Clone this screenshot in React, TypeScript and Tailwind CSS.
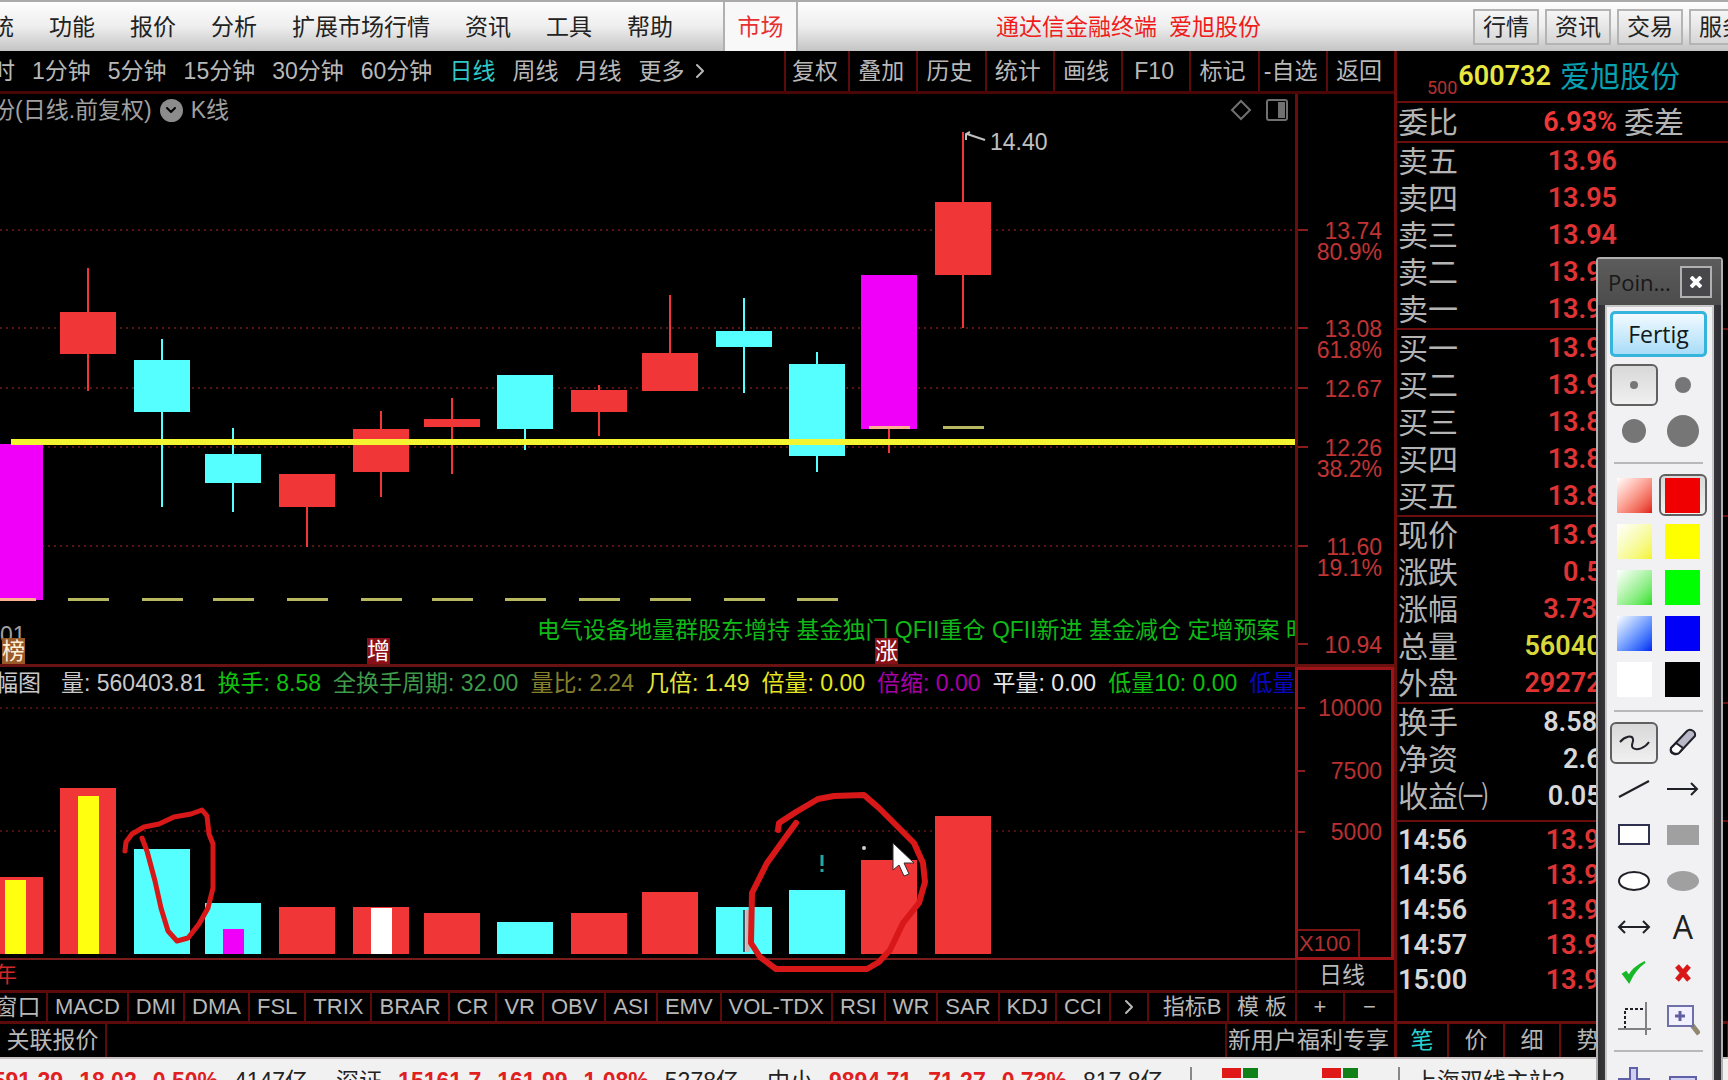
import type { ReactNode } from 'react'
import { ChevronDown, ChevronRight } from 'lucide-react'

const RED = '#f03636'
const CYAN = '#55ffff'
const MAGENTA = '#f000f8'

const MENU = ['功能', '报价', '分析', '扩展市场行情', '资讯', '工具', '帮助']
const PERIODS = ['分时', '1分钟', '5分钟', '15分钟', '30分钟', '60分钟', '日线', '周线', '月线']
const CHART_TOOLS = ['复权', '叠加', '历史', '统计', '画线', 'F10', '标记', '-自选', '返回']
const INDICATORS = [
  'MACD', 'DMI', 'DMA', 'FSL', 'TRIX', 'BRAR', 'CR', 'VR', 'OBV', 'ASI',
  'EMV', 'VOL-TDX', 'RSI', 'WR', 'SAR', 'KDJ', 'CCI',
]

// x, body top, body bottom, wick top, wick bottom (y measured from the chart's top)
type Candle = { x: number; top: number; bottom: number; high: number; low: number; fill: string }
const CANDLES: Candle[] = [
  { x: -13, top: 350, bottom: 506, high: 350, low: 506, fill: MAGENTA },
  { x: 60,  top: 218, bottom: 260, high: 174, low: 297, fill: RED },
  { x: 134, top: 266, bottom: 318, high: 245, low: 413, fill: CYAN },
  { x: 205, top: 360, bottom: 389, high: 334, low: 418, fill: CYAN },
  { x: 279, top: 380, bottom: 413, high: 380, low: 453, fill: RED },
  { x: 353, top: 335, bottom: 378, high: 317, low: 403, fill: RED },
  { x: 424, top: 325, bottom: 333, high: 304, low: 380, fill: RED },
  { x: 497, top: 281, bottom: 335, high: 281, low: 356, fill: CYAN },
  { x: 571, top: 296, bottom: 318, high: 291, low: 342, fill: RED },
  { x: 642, top: 259, bottom: 297, high: 201, low: 297, fill: RED },
  { x: 716, top: 237, bottom: 253, high: 204, low: 299, fill: CYAN },
  { x: 789, top: 270, bottom: 362, high: 258, low: 378, fill: CYAN },
  { x: 861, top: 181, bottom: 335, high: 181, low: 359, fill: MAGENTA },
  { x: 935, top: 108, bottom: 181, high: 38,  low: 234, fill: RED },
]

const PRICE_AXIS = [
  { y: 136, price: '13.74', pct: '80.9%' },
  { y: 234, price: '13.08', pct: '61.8%' },
  { y: 294, price: '12.67' },
  { y: 353, price: '12.26', pct: '38.2%' },
  { y: 452, price: '11.60', pct: '19.1%' },
  { y: 550, price: '10.94' },
]

// bar height, with an optional inner bar
type Volume = { x: number; h: number; fill: string; inner?: { h: number; fill: string } }
const VOLUMES: Volume[] = [
  { x: -13, h: 77,  fill: RED, inner: { h: 74, fill: '#ffff10' } },
  { x: 60,  h: 166, fill: RED, inner: { h: 158, fill: '#ffff10' } },
  { x: 134, h: 105, fill: CYAN },
  { x: 205, h: 51,  fill: CYAN, inner: { h: 25, fill: MAGENTA } },
  { x: 279, h: 47,  fill: RED },
  { x: 353, h: 47,  fill: RED, inner: { h: 46, fill: '#ffffff' } },
  { x: 424, h: 41,  fill: RED },
  { x: 497, h: 32,  fill: CYAN },
  { x: 571, h: 41,  fill: RED },
  { x: 642, h: 62,  fill: RED },
  { x: 716, h: 47,  fill: CYAN },
  { x: 789, h: 64,  fill: CYAN },
  { x: 861, h: 94,  fill: RED },
  { x: 935, h: 138, fill: RED },
]

const VOLUME_AXIS = [
  { y: 40, label: '10000' },
  { y: 103, label: '7500' },
  { y: 164, label: '5000' },
]

const VOLUME_STATS = [
  { text: '量: 560403.81', cls: 'text-[#c8c8c8]' },
  { text: '换手: 8.58', cls: 'text-[#10c010]' },
  { text: '全换手周期: 32.00', cls: 'text-[#3f9a4a]' },
  { text: '量比: 2.24', cls: 'text-[#85802c]' },
  { text: '几倍: 1.49', cls: 'text-[#e6e63c]' },
  { text: '倍量: 0.00', cls: 'text-[#e6e620]' },
  { text: '倍缩: 0.00', cls: 'text-[#a800a8]' },
  { text: '平量: 0.00', cls: 'text-[#e8e8e8]' },
  { text: '低量10: 0.00', cls: 'text-[#10c010]' },
  { text: '低量', cls: 'text-[#0808c0]' },
]

type Quote = { label: string; value: string; cls?: string }
const SECTIONS: Quote[][] = [
  [
    { label: '卖五', value: '13.96' },
    { label: '卖四', value: '13.95' },
    { label: '卖三', value: '13.94' },
    { label: '卖二', value: '13.93' },
    { label: '卖一', value: '13.92' },
  ],
  [
    { label: '买一', value: '13.91' },
    { label: '买二', value: '13.90' },
    { label: '买三', value: '13.89' },
    { label: '买四', value: '13.88' },
    { label: '买五', value: '13.87' },
  ],
  [
    { label: '现价', value: '13.91' },
    { label: '涨跌', value: '0.50' },
    { label: '涨幅', value: '3.73%' },
    { label: '总量', value: '560404', cls: 'text-[#d8d83c]' },
    { label: '外盘', value: '292724' },
  ],
  [
    { label: '换手', value: '8.58%', cls: 'text-[#d8d8d8]' },
    { label: '净资', value: '2.60', cls: 'text-[#d8d8d8]' },
    { label: '收益㈠', value: '0.050', cls: 'text-[#d8d8d8]' },
  ],
]

const TICKS = ['14:56', '14:56', '14:56', '14:57', '15:00']

const INDEXES = [
  { name: '上证', last: '3591.29', change: '18.02', pct: '0.50%', amount: '4147亿' },
  { name: '深证', last: '15161.7', change: '161.99', pct: '1.08%', amount: '5278亿' },
  { name: '中小', last: '9894.71', change: '71.27', pct: '0.73%', amount: '817.8亿' },
]

function MenuBar() {
  return (
    <header className="flex h-[51px] shrink-0 items-stretch whitespace-nowrap border-t-2 border-[#a9aaac] bg-linear-to-b from-[#fdfdfd] via-[#eeeeee] to-[#c4c4c4] text-[23px] leading-[28px] text-[#222]">
      <nav className="-ml-[32px] flex items-center gap-[35px] pr-[50px]">
        <button>系统</button>
        {MENU.map((m) => <button key={m}>{m}</button>)}
      </nav>
      <button className="w-[75px] border-x-2 border-[#b0b0b0] bg-[#f8f8f8] text-[#e83030]">市场</button>
      <div className="ml-[198px] flex items-center gap-3 text-[#f01c1c]">
        <span>通达信金融终端</span>
        <span>爱旭股份</span>
      </div>
      <div className="ml-auto -mr-[27px] flex items-center gap-[6px]">
        {['行情', '资讯', '交易', '服务'].map((b) => (
          <button key={b} className="h-[36px] w-[66px] border-2 border-[#b4b4b4] bg-linear-to-b from-[#f6f6f6] to-[#d6d6d6]">{b}</button>
        ))}
      </div>
    </header>
  )
}

function PeriodBar() {
  return (
    <div className="flex h-[43px] shrink-0 justify-between whitespace-nowrap border-b-3 border-[#4a0505] text-[23px] leading-[28px] text-[#b8b8b8]">
      <nav className="-ml-[31px] flex items-center gap-[17px]">
        {PERIODS.map((p) => (
          <button key={p} className={p === '日线' ? 'text-[#30c8c8]' : ''}>{p}</button>
        ))}
        <button className="flex items-center gap-1">更多<ChevronRight size={24} strokeWidth={2} /></button>
      </nav>
      <div className="grid w-[610px] grid-cols-[64px_repeat(8,1fr)]">
        {CHART_TOOLS.map((t) => (
          <button key={t} className="border-l-2 border-[#5c0a0a] pr-1">{t}</button>
        ))}
      </div>
    </div>
  )
}

function PriceChart() {
  return (
    <div className="flex h-[573px] shrink-0 border-b-3 border-[#6a1212]">
      <div className="relative min-w-0 flex-1">
        <svg className="block h-full w-full" fontSize="23">
          {PRICE_AXIS.slice(0, 5).map((t) => (
            <line key={t.y} x1="0" x2="100%" y1={t.y} y2={t.y} stroke="#5a1414" strokeWidth="2" strokeDasharray="2 4" />
          ))}
          {CANDLES.map((c) => (
            <g key={c.x} fill={c.fill}>
              <rect x={c.x + 27} y={c.high} width="2" height={c.low - c.high} fill={c.fill === MAGENTA ? RED : c.fill} />
              <rect x={c.x} y={c.top} width="56" height={c.bottom - c.top} />
            </g>
          ))}
          {/* stop levels */}
          {CANDLES.map((c, i) => (
            <rect key={c.x} x={c.x + 8} y={i > 11 ? 332 : 504} width="41" height="3" fill={i === 0 || i === 12 ? '#ffb090' : '#b8b860'} />
          ))}
          <line x1="11" x2="100%" y1="348" y2="348" stroke="#f4f430" strokeWidth="6" />
          <path d="M966 46v-6l4-2M967 40l18 6" fill="none" stroke="#c0c0c0" strokeWidth="2" />
          <text x="990" y="56" fill="#c0c0c0">14.40</text>
          <text x="0" y="549" fill="#a0a0a0">01</text>
          <text x="537" y="544" fill="#10b818">电气设备地量群股东增持 基金独门 QFII重仓 QFII新进 基金减仓 定增预案 时</text>
        </svg>
        <div className="absolute left-0 top-0 -ml-[77px] flex items-center whitespace-nowrap text-[23px] leading-[32px] text-[#a0a0a0]">
          <span>爱旭股份(日线.前复权)</span>
          <button aria-label="展开" className="mx-2 flex size-[23px] items-center justify-center rounded-full bg-[#8c8c8c] text-black">
            <ChevronDown size={16} strokeWidth={3} />
          </button>
          <span>K线</span>
        </div>
        <div className="absolute right-[6px] top-1 flex items-center gap-3">
          <svg width="24" height="24" fill="none" stroke="#707070" strokeWidth="2">
            <path d="M12 3l9 9-9 9-9-9z" />
          </svg>
          <svg width="24" height="24" fill="none" stroke="#707070" strokeWidth="2">
            <rect x="2" y="2" width="20" height="20" rx="2" />
            <rect x="14" y="5" width="5" height="14" fill="#707070" />
          </svg>
        </div>
        <span className="absolute bottom-0 left-[2px] bg-[#9a5a28] text-[23px] leading-[26px] text-[#fff0d8]">榜</span>
        <span className="absolute bottom-0 left-[367px] bg-[#8a1018] text-[23px] leading-[26px] text-white">增</span>
        <span className="absolute bottom-0 left-[875px] bg-[#8a1018] text-[23px] leading-[26px] text-white">涨</span>
      </div>
      <svg className="block h-full w-[99px] border-l-3 border-[#6a0d0d]" fontSize="23" fill="#c03434" textAnchor="end">
        {PRICE_AXIS.map((t) => (
          <g key={t.y}>
            <rect x="0" y={t.y - 1} width="10" height="2" fill="#8a1c1c" />
            <text x="84" y={t.y + 9}>{t.price}</text>
            {t.pct && <text x="84" y={t.y + 30}>{t.pct}</text>}
          </g>
        ))}
      </svg>
    </div>
  )
}

function VolumeChart() {
  const base = 287
  return (
    <div className="relative z-10 flex h-[293px] shrink-0">
      <div className="relative min-w-0 flex-1 border-b-2 border-[#7a1c1c]">
        <svg className="block h-full w-full overflow-visible">
          <line x1="0" x2="100%" y1="41" y2="41" stroke="#4a1010" strokeWidth="2" strokeDasharray="2 4" />
          <line x1="0" x2="100%" y1="164" y2="164" stroke="#4a1010" strokeWidth="2" strokeDasharray="2 4" />
          {VOLUMES.map((v) => (
            <g key={v.x}>
              <rect x={v.x} y={base - v.h} width="56" height={v.h} fill={v.fill} />
              {v.inner && <rect x={v.x + 18} y={base - v.inner.h} width="21" height={v.inner.h} fill={v.inner.fill} />}
            </g>
          ))}
          <rect x="743" y="243" width="2" height="42" fill="#405060" />
          <rect x="746" y="243" width="4" height="42" fill="#c8b8b8" />
          <path d="M822 188v11M822 202v3" stroke="#20a8a8" strokeWidth="3" />
          <circle cx="864" cy="181" r="2" fill="#d0d0d0" />
          {/* pen marks */}
          <g fill="none" stroke="#d81818" strokeLinecap="round" strokeLinejoin="round">
            <path strokeWidth="5" d="M125 184l1-9 6-8 12-7 15-3 15-7 17-3 11-4 5 6 2 18 4 10v44l-5 20-9 16-11 14-11 3-9-10-7-23-6-27-8-30-5-13" />
            <path strokeWidth="6" d="M778 163l1-7 17-11 22-13 16-3 30-1 15 13 17 17 18 18 9 20 2 19-6 21-16 20-13 27-11 12-12 7h-91l-16-12-9-14 1-50 15-30 18-25 11-15" />
          </g>
          <path d="M893 176v27l6-5 5 11 5-2-5-11h10z" fill="#fff" stroke="#303030" strokeWidth="1" />
        </svg>
        <div className="absolute inset-x-0 top-0 overflow-hidden">
          <div className="-ml-[28px] flex whitespace-nowrap text-[23px] leading-[33px]">
            <span className="mr-5 text-[#c8c8c8]">振幅图</span>
            <div className="flex gap-[12px]">
              {VOLUME_STATS.map((s) => <span key={s.text} className={s.cls}>{s.text}</span>)}
            </div>
          </div>
        </div>
      </div>
      <div className="relative w-[99px] border-3 border-[#9a1418]">
        <svg className="block h-full w-full" fontSize="23" fill="#b83030" textAnchor="end">
          {VOLUME_AXIS.map((t) => (
            <g key={t.y}>
              <rect x="0" y={t.y - 3} width="7" height="2" fill="#8a1c1c" />
              <text x="84" y={t.y + 6}>{t.label}</text>
            </g>
          ))}
        </svg>
        <span className="absolute bottom-0 left-0 border-r-2 border-t-2 border-[#7a1414] pl-px pr-2 text-[22px] leading-[26px] text-[#b03030]">X100</span>
      </div>
    </div>
  )
}

function BottomBars() {
  return (
    <div className="shrink-0 whitespace-nowrap text-[22px] leading-[28px] text-[#b8b8b8]">
      <div className="flex h-[30px] leading-[30px]">
        <span className="-ml-[5px] flex-1 text-[#d02828]">年</span>
        <span className="w-[99px] border-l-2 border-[#5c0a0a] pl-[22px] text-[23px]">日线</span>
      </div>
      <nav className="flex h-[34px] border-y-3 border-[#5c0a0a]">
        <button className="-ml-[11px] w-[57px] shrink-0 text-[23px]">窗口</button>
        {INDICATORS.map((name) => (
          <button key={name} className="shrink-0 border-l-2 border-[#5c0a0a] px-[7px]">{name}</button>
        ))}
        <button aria-label="更多指标" className="flex flex-1 items-center justify-center border-l-2 border-[#5c0a0a]">
          <ChevronRight size={24} />
        </button>
        <button className="w-[80px] shrink-0 border-l-2 border-[#5c0a0a] pl-2">指标B</button>
        <button className="w-[68px] shrink-0 border-l-2 border-[#5c0a0a]">模 板</button>
        <button className="w-[48px] shrink-0 border-l-2 border-[#5c0a0a]">+</button>
        <button className="w-[51px] shrink-0 border-l-2 border-[#5c0a0a]">−</button>
      </nav>
      <div className="flex h-[33px] justify-between text-[23px] leading-[33px]">
        <button className="w-[107px] border-r-2 border-[#5c0a0a]">关联报价</button>
        <button className="w-[169px] border-l-2 border-[#5c0a0a] pr-[4px]">新用户福利专享</button>
      </div>
    </div>
  )
}

function QuotePanel() {
  return (
    <aside className="flex w-[334px] shrink-0 flex-col overflow-hidden whitespace-nowrap border-l-3 border-[#6a0d0d] text-[30px] leading-[37px] text-[#b4b4b4]">
      <div className="flex h-[50px] items-center pl-[30px] font-['Roboto','Noto_Sans_CJK_SC',sans-serif]">
        <span className="self-end text-[18px] leading-[26px] text-[#b83030]">500</span>
        <span className="ml-px text-[27px] font-semibold text-[#e8e840]">600732</span>
        <span className="ml-[9px] text-[#08a0b0]">爱旭股份</span>
      </div>
      <div className="flex h-[40px] items-center border-t-2 border-[#6a0d0d] pl-px">
        <span className="w-[100px]">委比</span>
        <span className="w-[119px] text-right font-['Roboto',sans-serif] text-[27px] font-semibold text-[#f03838]">6.93%</span>
        <span className="ml-[7px]">委差</span>
      </div>
      {SECTIONS.map((rows) => (
        <div key={rows[0].label} className="border-t-2 border-[#6a0d0d]">
          <table className="w-full table-fixed">
            <tbody>
              {rows.map((r) => (
                <tr key={r.label} className="h-[37px]">
                  <th scope="row" className="w-[101px] p-0 pl-px text-left font-normal">{r.label}</th>
                  <td className={`w-[119px] p-0 text-right font-['Roboto',sans-serif] text-[27px] font-semibold ${r.cls ?? 'text-[#e03434]'}`}>{r.value}</td>
                  <td className="p-0" />
                </tr>
              ))}
            </tbody>
          </table>
        </div>
      ))}
      <div className="mt-[5px] flex-1 border-t-2 border-[#6a0d0d]">
        <table className="w-full table-fixed font-['Roboto',sans-serif] text-[27px] font-semibold leading-[34px]">
          <tbody>
            {TICKS.map((t, i) => (
              <tr key={i} className="h-[35px]">
                <td className="w-[101px] p-0 pl-px text-[#d8d8d8]">{t}</td>
                <td className="w-[117px] p-0 text-right text-[#e03434]">13.91</td>
                <td className="p-0" />
              </tr>
            ))}
          </tbody>
        </table>
      </div>
      <div className="flex h-[36px] shrink-0 border-t-3 border-[#6a0d0d] text-[23px] leading-[33px]">
        {['笔', '价', '细', '势', '联', '值'].map((t, i) => (
          <button key={t} className={`shrink-0 border-r-2 border-[#6a0d0d] ${i === 0 ? 'w-[52px] text-[#28d0d0]' : 'w-[56px]'}`}>{t}</button>
        ))}
      </div>
    </aside>
  )
}

function Lights() {
  return (
    <span className="flex h-[10px] gap-[2px]">
      <i className="w-[19px] bg-[#e01818]" />
      <i className="w-[15px] bg-[#108018]" />
    </span>
  )
}

function StatusBar() {
  return (
    <footer className="flex h-[40px] shrink-0 items-start whitespace-nowrap border-t-2 border-[#c8c0c0] bg-[#f2f1f1] pt-[8px] text-[23px] leading-[28px] text-[#222]">
      <div className="-ml-[82px] flex w-[1272px] shrink-0 gap-[28px]">
        {INDEXES.map((x) => (
          <div key={x.name} className="flex gap-4">
            <span>{x.name}</span>
            <span className="font-bold text-[#e02020]">{x.last}</span>
            <span className="font-bold text-[#e02020]">{x.change}</span>
            <span className="font-bold text-[#e02020]">{x.pct}</span>
            <span>{x.amount}</span>
          </div>
        ))}
      </div>
      <div className="flex h-full w-[210px] shrink-0 gap-[64px] border-x-2 border-[#888] pl-[30px] pt-px">
        <Lights />
        <Lights />
      </div>
      <span className="pl-[14px]">上海双线主站2</span>
    </footer>
  )
}

const SWATCHES = [
  { soft: 'bg-linear-to-br from-white to-[#e01010]', solid: 'bg-[#f00000]', name: 'Rot' },
  { soft: 'bg-linear-to-br from-white to-[#f4f410]', solid: 'bg-[#ffff00]', name: 'Gelb' },
  { soft: 'bg-linear-to-br from-white to-[#10e010]', solid: 'bg-[#00ff00]', name: 'Grün' },
  { soft: 'bg-linear-to-br from-white to-[#1010f0]', solid: 'bg-[#0000f8]', name: 'Blau' },
  { soft: 'bg-white', solid: 'bg-black', name: 'Schwarz' },
]

const TOOLS: { name: string; icon: ReactNode }[] = [
  { name: 'Freihand', icon: <path d="M3 17c5-6 12-7 13-3 1 3-3 6 0 9 4 3 12 0 16-6" /> },
  {
    name: 'Radierer',
    icon: (
      <>
        <path d="M5 23L21 6c3-3 9 0 8 5L14 27c-3 4-11 2-9-4z" fill="#b8b8c8" />
        <path d="M5 23l5-5 7 5-4 5c-3 2-9 0-8-5z" fill="#fff" />
      </>
    ),
  },
  { name: 'Linie', icon: <path d="M2 26L32 10" /> },
  { name: 'Pfeil', icon: <path d="M1 18h30M25 12l6 6-6 6" /> },
  { name: 'Rechteck', icon: <rect x="2" y="8" width="30" height="19" fill="#fff" stroke="#303050" /> },
  { name: 'Rechteck gefüllt', icon: <rect x="1" y="8" width="32" height="20" fill="#a0a0a0" stroke="none" /> },
  { name: 'Ellipse', icon: <ellipse cx="17" cy="18" rx="15" ry="9" fill="#fff" /> },
  { name: 'Ellipse gefüllt', icon: <ellipse cx="17" cy="18" rx="16" ry="10" fill="#a0a0a0" stroke="none" /> },
  { name: 'Doppelpfeil', icon: <path d="M2 18h30M8 12l-6 6 6 6M26 12l6 6-6 6" /> },
  { name: 'Text', icon: null },
  { name: 'Übernehmen', icon: <path d="M6 19l6 8C16 18 21 12 28 7 20 11 15 15 12 21l-3-4z" fill="#18b828" stroke="#18b828" /> },
  { name: 'Löschen', icon: <path d="M11 11l12 14M23 11L11 25" stroke="#d81818" strokeWidth="5" /> },
  {
    name: 'Zuschneiden',
    icon: (
      <>
        <path d="M8 28V8h20" strokeDasharray="3 2" />
        <path d="M1 28h33M29 1v33" stroke="#808080" />
      </>
    ),
  },
  {
    name: 'Zoom',
    icon: (
      <>
        <path d="M26 24l7 9" stroke="#908870" strokeWidth="5" />
        <rect x="2" y="5" width="25" height="20" fill="#f0f0ff" stroke="#7070a8" />
        <path d="M14 10v10M9 15h10" stroke="#6060a0" strokeWidth="3" />
      </>
    ),
  },
]

function Divider() {
  return <div className="flex h-[18px] items-center px-[4px]"><div className="h-[2px] w-full bg-[#b8b8b8]" /></div>
}

// Floating pen palette that sits above the terminal
function PenPalette() {
  const cell = 'flex h-[42px] w-[48px] items-center justify-center rounded-[6px] border-2'
  const on = 'border-[#606060] bg-linear-to-b from-[#d8d8d8] to-[#f0f0f0]'
  return (
    <section className="absolute right-[5px] top-[257px] z-20 w-[127px] rounded-t-[4px] border-2 border-b-0 border-[#b0b0b0] bg-linear-to-r from-[#303034] via-[#6a6a6a] to-[#303034] px-[7px] font-['Open_Sans','Noto_Sans',sans-serif]">
      <div className="-mx-[7px] flex h-[46px] items-center justify-between bg-linear-to-b from-[#5c5c5c] to-[#4c4c4c] pl-[10px] pr-[9px]">
        <h2 className="text-[22px] leading-[30px] text-[#181818]">Poin...</h2>
        <button aria-label="Schließen" className="flex size-[32px] items-center justify-center border-2 border-[#b0b0b0] bg-[#48484c]">
          <svg width="12" height="12" stroke="#fff" strokeWidth="4"><path d="M1 1l10 10M11 1L1 11" /></svg>
        </button>
      </div>
      <div className="border-x-2 border-t-2 border-[#c8c8c8] bg-[#f1f0f2] pb-[6px] pl-[3px] pr-[5px] pt-[4px]">
        <button className="mb-[5px] h-[46px] w-full rounded-[5px] border-3 border-[#35b4dc] bg-linear-to-b from-[#f2faff] to-[#a8dcf8] text-[23px] leading-[28px] text-[#101820]">Fertig</button>
        <div className="grid grid-cols-2">
          {[4, 8, 12, 16].map((r) => (
            <div key={r} className="flex h-[46px] items-center justify-center">
              <button aria-label={`Stärke ${r}`} className={`${cell} ${r === 4 ? on : 'border-transparent'}`}>
                <svg width="36" height="36" className="shrink-0"><circle cx="18" cy="18" r={r} fill="#767676" /></svg>
              </button>
            </div>
          ))}
        </div>
        <Divider />
        <div className="grid grid-cols-2">
          {SWATCHES.map((s, i) => [
            <div key={`${s.name}-soft`} className="flex h-[46px] items-center justify-center">
              <button aria-label={`${s.name} transparent`} className={`size-[35px] ${s.soft}`} />
            </div>,
            <div key={s.name} className="flex h-[46px] items-center justify-center">
              <button aria-label={s.name} className={`${cell} ${i === 0 ? on : 'border-transparent'}`}>
                <span className={`size-[35px] ${s.solid}`} />
              </button>
            </div>,
          ])}
        </div>
        <Divider />
        <div className="grid grid-cols-2">
          {TOOLS.map((t, i) => (
            <div key={t.name} className="flex h-[46px] items-center justify-center">
              <button aria-label={t.name} className={`${cell} ${i === 0 ? on : 'border-transparent'}`}>
                {t.icon ? (
                  <svg width="34" height="36" fill="none" stroke="#202028" strokeWidth="2" className="shrink-0">{t.icon}</svg>
                ) : (
                  <span className="text-[32px] leading-[36px] text-[#202020]">A</span>
                )}
              </button>
            </div>
          ))}
        </div>
        <Divider />
        <div className="grid grid-cols-2 justify-items-center pt-[6px]">
          <button aria-label="Hinzufügen">
            <svg width="34" height="34" fill="#d0d0f0" stroke="#6060a8" strokeWidth="2"><path d="M13 2h7v11h12v8H20v11h-7V21H2v-8h11z" /></svg>
          </button>
          <button aria-label="Minimieren">
            <svg width="34" height="34" fill="#d0d0f0" stroke="#6060a8" strokeWidth="2"><rect x="4" y="11" width="26" height="9" /></svg>
          </button>
        </div>
      </div>
    </section>
  )
}

export default function App() {
  return (
    <div className="relative flex h-screen flex-col overflow-hidden bg-black font-['Liberation_Sans','Noto_Sans_CJK_SC',sans-serif]">
      <MenuBar />
      <main className="flex shrink-0">
        <div className="flex min-w-0 flex-1 flex-col overflow-hidden">
          <PeriodBar />
          <PriceChart />
          <VolumeChart />
          <BottomBars />
        </div>
        <QuotePanel />
      </main>
      <StatusBar />
      <PenPalette />
    </div>
  )
}
